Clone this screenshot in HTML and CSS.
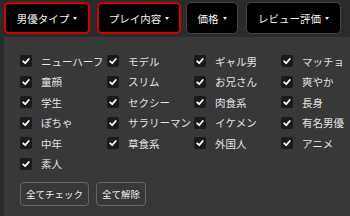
FILE: index.html
```html
<!DOCTYPE html>
<html lang="ja">
<head>
<meta charset="utf-8">
<link rel="stylesheet" href="styles.css">
</head>
<body>
<div class="tabs">
  <div class="tab active">男優タイプ<span class="caret"></span></div>
  <div class="tab active t2">プレイ内容<span class="caret"></span></div>
  <div class="tab t3">価格<span class="caret"></span></div>
  <div class="tab t4">レビュー評価<span class="caret"></span></div>
</div>
<div class="panel">
  <div class="grid">
    <label class="item"><span class="cb"><svg viewBox="0 0 12 12"><path d="M3.2 6.3 L5.2 8.2 L8.8 4" fill="none" stroke="#fff" stroke-width="1.8" stroke-linecap="round" stroke-linejoin="round"/></svg></span>ニューハーフ</label>
    <label class="item"><span class="cb"><svg viewBox="0 0 12 12"><path d="M3.2 6.3 L5.2 8.2 L8.8 4" fill="none" stroke="#fff" stroke-width="1.8" stroke-linecap="round" stroke-linejoin="round"/></svg></span>モデル</label>
    <label class="item"><span class="cb"><svg viewBox="0 0 12 12"><path d="M3.2 6.3 L5.2 8.2 L8.8 4" fill="none" stroke="#fff" stroke-width="1.8" stroke-linecap="round" stroke-linejoin="round"/></svg></span>ギャル男</label>
    <label class="item"><span class="cb"><svg viewBox="0 0 12 12"><path d="M3.2 6.3 L5.2 8.2 L8.8 4" fill="none" stroke="#fff" stroke-width="1.8" stroke-linecap="round" stroke-linejoin="round"/></svg></span>マッチョ</label>
    <label class="item"><span class="cb"><svg viewBox="0 0 12 12"><path d="M3.2 6.3 L5.2 8.2 L8.8 4" fill="none" stroke="#fff" stroke-width="1.8" stroke-linecap="round" stroke-linejoin="round"/></svg></span>童顔</label>
    <label class="item"><span class="cb"><svg viewBox="0 0 12 12"><path d="M3.2 6.3 L5.2 8.2 L8.8 4" fill="none" stroke="#fff" stroke-width="1.8" stroke-linecap="round" stroke-linejoin="round"/></svg></span>スリム</label>
    <label class="item"><span class="cb"><svg viewBox="0 0 12 12"><path d="M3.2 6.3 L5.2 8.2 L8.8 4" fill="none" stroke="#fff" stroke-width="1.8" stroke-linecap="round" stroke-linejoin="round"/></svg></span>お兄さん</label>
    <label class="item"><span class="cb"><svg viewBox="0 0 12 12"><path d="M3.2 6.3 L5.2 8.2 L8.8 4" fill="none" stroke="#fff" stroke-width="1.8" stroke-linecap="round" stroke-linejoin="round"/></svg></span>爽やか</label>
    <label class="item"><span class="cb"><svg viewBox="0 0 12 12"><path d="M3.2 6.3 L5.2 8.2 L8.8 4" fill="none" stroke="#fff" stroke-width="1.8" stroke-linecap="round" stroke-linejoin="round"/></svg></span>学生</label>
    <label class="item"><span class="cb"><svg viewBox="0 0 12 12"><path d="M3.2 6.3 L5.2 8.2 L8.8 4" fill="none" stroke="#fff" stroke-width="1.8" stroke-linecap="round" stroke-linejoin="round"/></svg></span>セクシー</label>
    <label class="item"><span class="cb"><svg viewBox="0 0 12 12"><path d="M3.2 6.3 L5.2 8.2 L8.8 4" fill="none" stroke="#fff" stroke-width="1.8" stroke-linecap="round" stroke-linejoin="round"/></svg></span>肉食系</label>
    <label class="item"><span class="cb"><svg viewBox="0 0 12 12"><path d="M3.2 6.3 L5.2 8.2 L8.8 4" fill="none" stroke="#fff" stroke-width="1.8" stroke-linecap="round" stroke-linejoin="round"/></svg></span>長身</label>
    <label class="item"><span class="cb"><svg viewBox="0 0 12 12"><path d="M3.2 6.3 L5.2 8.2 L8.8 4" fill="none" stroke="#fff" stroke-width="1.8" stroke-linecap="round" stroke-linejoin="round"/></svg></span>ぽちゃ</label>
    <label class="item"><span class="cb"><svg viewBox="0 0 12 12"><path d="M3.2 6.3 L5.2 8.2 L8.8 4" fill="none" stroke="#fff" stroke-width="1.8" stroke-linecap="round" stroke-linejoin="round"/></svg></span>サラリーマン</label>
    <label class="item"><span class="cb"><svg viewBox="0 0 12 12"><path d="M3.2 6.3 L5.2 8.2 L8.8 4" fill="none" stroke="#fff" stroke-width="1.8" stroke-linecap="round" stroke-linejoin="round"/></svg></span>イケメン</label>
    <label class="item"><span class="cb"><svg viewBox="0 0 12 12"><path d="M3.2 6.3 L5.2 8.2 L8.8 4" fill="none" stroke="#fff" stroke-width="1.8" stroke-linecap="round" stroke-linejoin="round"/></svg></span>有名男優</label>
    <label class="item"><span class="cb"><svg viewBox="0 0 12 12"><path d="M3.2 6.3 L5.2 8.2 L8.8 4" fill="none" stroke="#fff" stroke-width="1.8" stroke-linecap="round" stroke-linejoin="round"/></svg></span>中年</label>
    <label class="item"><span class="cb"><svg viewBox="0 0 12 12"><path d="M3.2 6.3 L5.2 8.2 L8.8 4" fill="none" stroke="#fff" stroke-width="1.8" stroke-linecap="round" stroke-linejoin="round"/></svg></span>草食系</label>
    <label class="item"><span class="cb"><svg viewBox="0 0 12 12"><path d="M3.2 6.3 L5.2 8.2 L8.8 4" fill="none" stroke="#fff" stroke-width="1.8" stroke-linecap="round" stroke-linejoin="round"/></svg></span>外国人</label>
    <label class="item"><span class="cb"><svg viewBox="0 0 12 12"><path d="M3.2 6.3 L5.2 8.2 L8.8 4" fill="none" stroke="#fff" stroke-width="1.8" stroke-linecap="round" stroke-linejoin="round"/></svg></span>アニメ</label>
    <label class="item"><span class="cb"><svg viewBox="0 0 12 12"><path d="M3.2 6.3 L5.2 8.2 L8.8 4" fill="none" stroke="#fff" stroke-width="1.8" stroke-linecap="round" stroke-linejoin="round"/></svg></span>素人</label>
  </div>
  <div class="actions">
    <div class="btn">全てチェック</div>
    <div class="btn">全て解除</div>
  </div>
</div>
</body>
</html>
```

FILE: styles.css
```css
html, body {
  margin: 0;
  padding: 0;
  background: #2b2b2b;
  font-family: "Noto Sans CJK JP", "Noto Sans", sans-serif;
  color: #eee;
}
body {
  width: 350px;
  height: 216px;
  overflow: hidden;
  display: flex;
  flex-direction: column;
}
.tabs {
  display: flex;
  padding: 2px 0 0 4px;
  gap: 7px;
}
.tab {
  box-sizing: border-box;
  height: 32px;
  display: flex;
  align-items: center;
  justify-content: center;
  background: #000;
  border: 1px solid #444;
  border-radius: 5px;
  font-size: 10.5px;
  color: #f2f2f2;
  width: 86px;
}
.tab.active {
  border: 2px solid #d40000;
}
.t2 { width: 84px; }
.t3 { width: 52px; margin-left: -2px; }
.t4 { width: 95px; margin-left: 1px; }
.caret {
  display: inline-block;
  width: 0;
  height: 0;
  border-left: 2.5px solid transparent;
  border-right: 2.5px solid transparent;
  border-top: 3px solid #eee;
  margin-left: 4px;
}
.panel {
  flex: 1;
  min-height: 0;
  margin: 3px 0 0 4px;
  background: #383838;
  padding: 14px 0 0 16px;
  overflow: hidden;
}
.grid {
  display: grid;
  grid-template-columns: repeat(3, 87px) 1fr;
  grid-auto-rows: 20.5px;
}
.item {
  display: flex;
  align-items: center;
  font-size: 10.5px;
  color: #e2e2e2;
  white-space: nowrap;
}
.cb {
  width: 12px;
  height: 12px;
  background: #1a1a1a;
  border-radius: 2px;
  margin-right: 9px;
  display: flex;
  flex: none;
}
.cb svg { width: 12px; height: 12px; }
.actions {
  display: flex;
  gap: 7px;
  margin-top: 8px;
}
.btn {
  box-sizing: border-box;
  height: 24px;
  padding: 0 5px;
  border: 1px solid #666;
  border-radius: 4px;
  display: flex;
  align-items: center;
  font-size: 9.5px;
  color: #eee;
}
```
